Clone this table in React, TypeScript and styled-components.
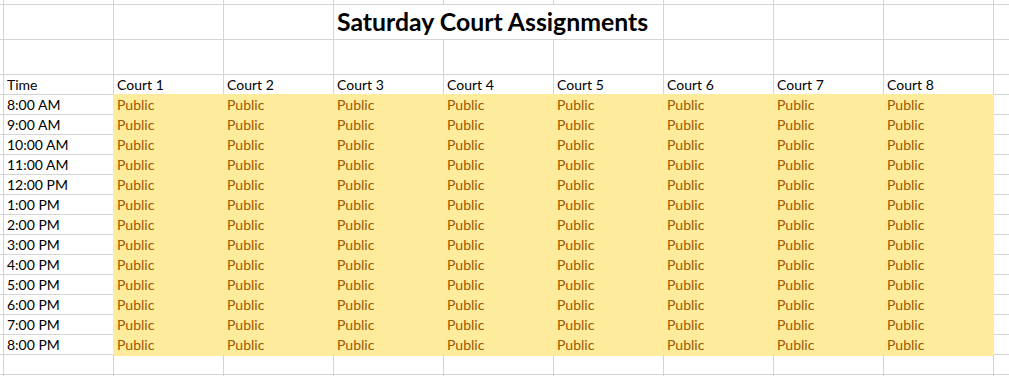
import React from 'react'
import styled, { createGlobalStyle } from 'styled-components'

const GlobalStyle = createGlobalStyle`
  html, body { margin: 0; padding: 0; background: #ffffff; }
  body { font-family: Lato, "Liberation Sans", sans-serif; }
`

const COURTS = [1, 2, 3, 4, 5, 6, 7, 8]
const TIMES = [
  '8:00 AM', '9:00 AM', '10:00 AM', '11:00 AM', '12:00 PM', '1:00 PM', '2:00 PM',
  '3:00 PM', '4:00 PM', '5:00 PM', '6:00 PM', '7:00 PM', '8:00 PM',
]

const Sheet = styled.div`
  display: grid;
  grid-template-columns: 4px repeat(9, 110px) 1fr;
  grid-template-rows: 5px 35px 35px 20px repeat(13, 20px) 20px 2px;
  width: 1009px;
  height: 376px;
  overflow: hidden;
  font-size: 14px;
  color: #000;
`

// one spreadsheet cell; $noRight hides the gridline where text spills over
const Cell = styled.div<{ $noRight?: boolean }>`
  box-sizing: border-box;
  border-bottom: 1px solid #d4d4d4;
  border-right: ${p => (p.$noRight ? 'none' : '1px solid #d4d4d4')};
  display: flex;
  align-items: flex-end;
  padding: 0 0 1px 3px;
  white-space: nowrap;
  line-height: 16px;
`

const Edge = styled.div`
  box-sizing: border-box;
  border-right: 1px solid #d4d4d4;
  border-bottom: 1px solid #d4d4d4;
`

const Title = styled(Cell)`
  overflow: visible;
  font-size: 24.8px;
  font-weight: 700;
  line-height: 28px;
  padding: 0 0 3px 3px;
  position: relative;
  z-index: 1;
`

// Excel "Neutral" style cell
const Neutral = styled.div`
  box-sizing: border-box;
  margin: -1px 0 -1px -1px;
  background: #ffeb9c;
  color: #9c5700;
  display: flex;
  align-items: flex-end;
  padding: 0 0 3px 4px;
  line-height: 16px;
`

const Fill = styled.div`
  box-sizing: border-box;
  border-bottom: 1px solid #d4d4d4;
`

function BlankRow({ last }: { last?: boolean }) {
  return (
    <>
      <Edge />
      {Array.from({ length: 9 }).map((_, i) => (
        <Cell key={i} />
      ))}
      {last ? <div /> : <Fill />}
    </>
  )
}

export default function App() {
  return (
    <>
      <GlobalStyle />
      <Sheet>
        <BlankRow />

        <Edge />
        <Cell />
        <Cell />
        <Cell />
        <Title $noRight>Saturday Court Assignments</Title>
        <Cell $noRight />
        {Array.from({ length: 4 }).map((_, i) => (
          <Cell key={i} />
        ))}
        <Fill />

        <BlankRow />

        <Edge />
        <Cell>Time</Cell>
        {COURTS.map(c => (
          <Cell key={c}>Court {c}</Cell>
        ))}
        <Fill />

        {TIMES.map(t => (
          <React.Fragment key={t}>
            <Edge />
            <Cell>{t}</Cell>
            {COURTS.map(c => (
              <Neutral key={c}>Public</Neutral>
            ))}
            <Fill />
          </React.Fragment>
        ))}

        <BlankRow />
        <BlankRow last />
      </Sheet>
    </>
  )
}
